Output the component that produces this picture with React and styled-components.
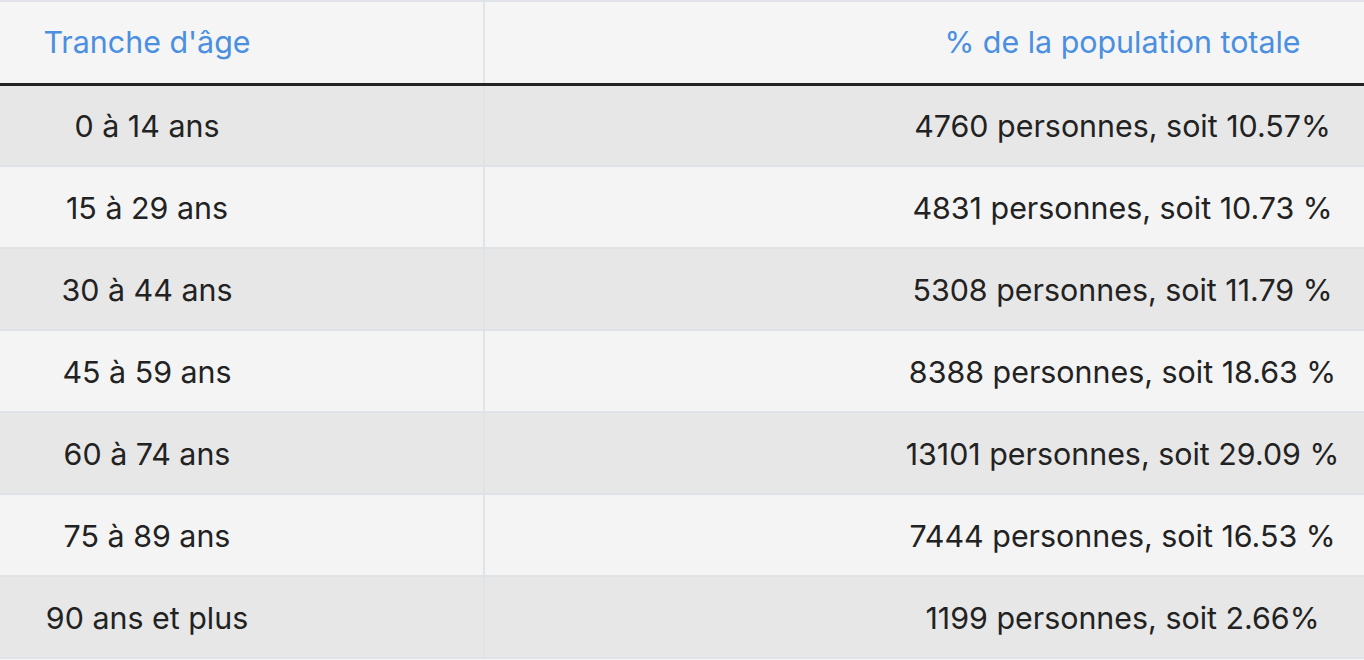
import React from "react";
import styled, { createGlobalStyle } from "styled-components";

const Global = createGlobalStyle`
  html, body { margin: 0; padding: 0; background: #f5f5f5; }
  body { font-family: Inter, "Noto Sans", sans-serif; overflow: hidden; }
`;

const Table = styled.table`
  width: 1364px;
  border-collapse: collapse;
  table-layout: fixed;
  border-top: 2px solid #e0e3e8;
`;

const Col = styled.col`
  width: ${(p) => p.$w}px;
`;

const HeadCell = styled.th`
  box-sizing: border-box;
  height: 83px;
  padding: ${(p) => (p.$right ? "0 0 0 396px" : "0 189px 0 0")};
  background: #f5f5f5;
  color: #4a8fe0;
  font-weight: 400;
  font-size: 30.4px;
  line-height: 1.2;
  text-align: center;
  border-bottom: 3px solid #232323;
  border-right: ${(p) => (p.$right ? "none" : "2px solid #e0e3e8")};
  white-space: nowrap;
`;

const Row = styled.tr`
  background: ${(p) => (p.$odd ? "#e7e7e7" : "#f4f4f4")};
`;

const Cell = styled.td`
  box-sizing: border-box;
  height: 82px;
  padding: ${(p) => (p.$right ? "2px 0 0 396px" : "2px 189px 0 0")};
  color: #222;
  font-size: 30.4px;
  line-height: 1.2;
  text-align: center;
  border-bottom: 2px solid #dfe2e6;
  border-right: ${(p) => (p.$right ? "none" : "2px solid #e0e3e8")};
  white-space: nowrap;
`;

const rows = [
  ["0 à 14 ans", "4760 personnes, soit 10.57%"],
  ["15 à 29 ans", "4831 personnes, soit 10.73 %"],
  ["30 à 44 ans", "5308 personnes, soit 11.79 %"],
  ["45 à 59 ans", "8388 personnes, soit 18.63 %"],
  ["60 à 74 ans", "13101 personnes, soit 29.09 %"],
  ["75 à 89 ans", "7444 personnes, soit 16.53 %"],
  ["90 ans et plus", "1199 personnes, soit 2.66%"],
];

export default function App() {
  return (
    <>
      <Global />
      <Table>
        <colgroup>
          <Col $w={484} />
          <Col $w={880} />
        </colgroup>
        <thead>
          <tr>
            <HeadCell>Tranche d'âge</HeadCell>
            <HeadCell $right>% de la population totale</HeadCell>
          </tr>
        </thead>
        <tbody>
          {rows.map(([a, b], i) => (
            <Row key={a} $odd={i % 2 === 0}>
              <Cell>{a}</Cell>
              <Cell $right>{b}</Cell>
            </Row>
          ))}
        </tbody>
      </Table>
    </>
  );
}
